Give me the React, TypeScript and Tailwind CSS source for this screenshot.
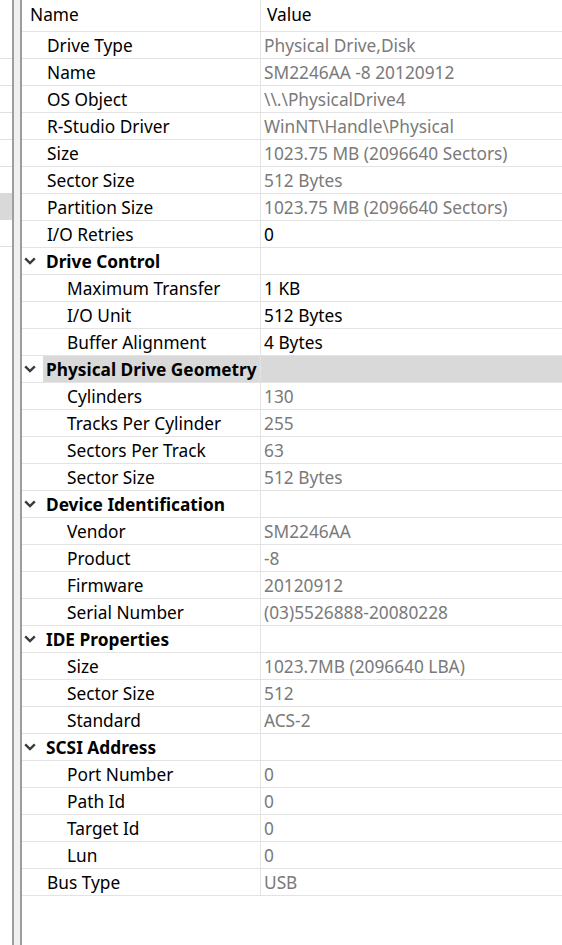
import React from 'react';

type Row = {
  name: string;
  value?: string;
  level: 0 | 1 | 2;
  group?: boolean;
  dark?: boolean;
  selected?: boolean;
};

const rows: Row[] = [
  { name: 'Drive Type', value: 'Physical Drive,Disk', level: 1 },
  { name: 'Name', value: 'SM2246AA -8 20120912', level: 1 },
  { name: 'OS Object', value: '\\\\.\\PhysicalDrive4', level: 1 },
  { name: 'R-Studio Driver', value: 'WinNT\\Handle\\Physical', level: 1 },
  { name: 'Size', value: '1023.75 MB (2096640 Sectors)', level: 1 },
  { name: 'Sector Size', value: '512 Bytes', level: 1 },
  { name: 'Partition Size', value: '1023.75 MB (2096640 Sectors)', level: 1 },
  { name: 'I/O Retries', value: '0', level: 1, dark: true },
  { name: 'Drive Control', level: 0, group: true },
  { name: 'Maximum Transfer', value: '1 KB', level: 2, dark: true },
  { name: 'I/O Unit', value: '512 Bytes', level: 2, dark: true },
  { name: 'Buffer Alignment', value: '4 Bytes', level: 2, dark: true },
  { name: 'Physical Drive Geometry', level: 0, group: true, selected: true },
  { name: 'Cylinders', value: '130', level: 2 },
  { name: 'Tracks Per Cylinder', value: '255', level: 2 },
  { name: 'Sectors Per Track', value: '63', level: 2 },
  { name: 'Sector Size', value: '512 Bytes', level: 2 },
  { name: 'Device Identification', level: 0, group: true },
  { name: 'Vendor', value: 'SM2246AA', level: 2 },
  { name: 'Product', value: '-8', level: 2 },
  { name: 'Firmware', value: '20120912', level: 2 },
  { name: 'Serial Number', value: '(03)5526888-20080228', level: 2 },
  { name: 'IDE Properties', level: 0, group: true },
  { name: 'Size', value: '1023.7MB (2096640 LBA)', level: 2 },
  { name: 'Sector Size', value: '512', level: 2 },
  { name: 'Standard', value: 'ACS-2', level: 2 },
  { name: 'SCSI Address', level: 0, group: true },
  { name: 'Port Number', value: '0', level: 2 },
  { name: 'Path Id', value: '0', level: 2 },
  { name: 'Target Id', value: '0', level: 2 },
  { name: 'Lun', value: '0', level: 2 },
  { name: 'Bus Type', value: 'USB', level: 1 },
];

const Chevron = () => (
  <svg width="12" height="8" viewBox="0 0 12 8" className="shrink-0">
    <path d="M1.2 1.4 L6 6 L10.8 1.4" fill="none" stroke="#3a3a3a" strokeWidth="2.4" />
  </svg>
);

function PropRow({ row }: { row: Row }) {
  const indent = row.level === 2 ? 'pl-[45px]' : 'pl-[25px]';
  return (
    <div className="flex h-[27px] border-b border-[#e3e3e3]">
      <div className="flex w-[239px] shrink-0 items-center border-r border-[#e3e3e3]">
        {row.group ? (
          <>
            <div className="flex w-[21px] shrink-0 items-center justify-end pr-[7px]">
              <Chevron />
            </div>
            <div
              className={`flex h-full flex-1 items-center whitespace-nowrap pl-[3px] pt-[1px] font-bold ${row.selected ? 'bg-[#d9d9d9]' : ''}`}
            >
              {row.name}
            </div>
          </>
        ) : (
          <span className={`${indent} pt-[1px] whitespace-nowrap`}>{row.name}</span>
        )}
      </div>
      <div
        className={`flex flex-1 items-center whitespace-nowrap pl-[3px] pt-[1px] ${row.selected ? 'bg-[#d9d9d9]' : ''} ${row.dark ? 'text-black' : 'text-[#7a7a7a]'}`}
      >
        {row.value}
      </div>
    </div>
  );
}

export default function App() {
  return (
    <div
      className="flex h-[945px] w-[562px] overflow-hidden bg-white text-[17.3px] text-black"
      style={{ fontFamily: '"Noto Sans", "Open Sans", sans-serif' }}
    >
      {/* neighbouring list, mostly hidden behind the splitter */}
      <div className="flex w-[12px] shrink-0 flex-col">
        <div className="h-[59px] border-b border-[#e0e0e0]" />
        <div className="h-[27px] border-b border-[#e0e0e0]" />
        <div className="h-[27px] border-b border-[#e0e0e0]" />
        <div className="h-[27px] border-b border-[#e0e0e0]" />
        <div className="h-[27px] border-b border-[#e0e0e0]" />
        <div className="h-[26px]" />
        <div className="h-[27px] bg-[#d9d9d9]" />
        <div className="h-[27px] border-b border-[#e0e0e0]" />
      </div>
      {/* splitter */}
      <div className="w-[2px] shrink-0 bg-[#9e9e9e]" />
      <div className="w-[6px] shrink-0 bg-[#f0f0f0]" />
      <div className="w-[2px] shrink-0 bg-[#9e9e9e]" />

      <div className="flex flex-1 flex-col">
        <div className="flex h-[32px] border-b border-[#e3e3e3]">
          <div className="flex w-[239px] shrink-0 items-center border-r border-[#e3e3e3] pl-[8px] pb-[1px]">
            Name
          </div>
          <div className="flex flex-1 items-center pl-[6px] pb-[1px]">Value</div>
        </div>
        {rows.map((row, i) => (
          <PropRow key={i} row={row} />
        ))}
      </div>
    </div>
  );
}
